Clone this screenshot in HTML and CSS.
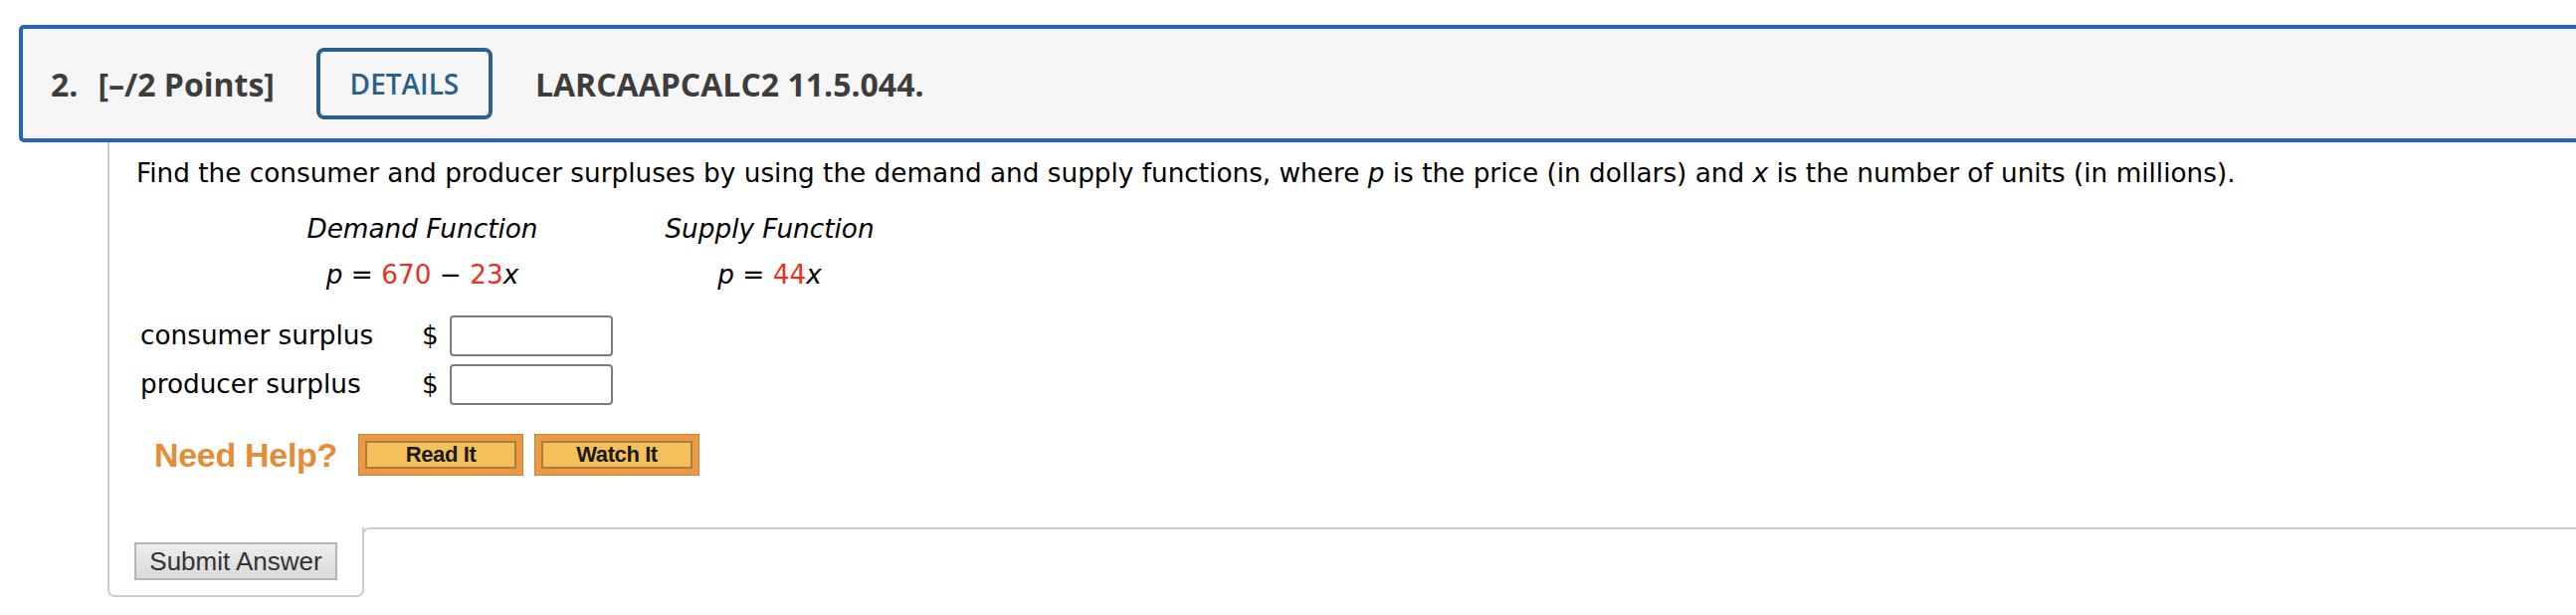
FILE: index.html
```html
<!DOCTYPE html>
<html lang="en">
<head>
<meta charset="utf-8">
<title>Question 2</title>
<link rel="stylesheet" href="styles.css">
</head>
<body>
<div class="page">
  <div class="qhead">
    <span class="qnum">2.</span>
    <span class="qpts">[–/2 Points]</span>
    <button class="details" type="button">DETAILS</button>
    <span class="qid">LARCAAPCALC2 11.5.044.</span>
  </div>
  <div class="question">
    <div class="qbody">
      <p class="prompt">Find the consumer and producer surpluses by using the demand and supply functions, where <i>p</i> is the price (in dollars) and <i>x</i> is the number of units (in millions).</p>
      <div class="funcs">
        <div class="fhead">Demand Function</div>
        <div class="fhead">Supply Function</div>
        <div class="feq"><i>p</i> = <span class="red">670</span> − <span class="red">23</span><i>x</i></div>
        <div class="feq"><i>p</i> = <span class="red">44</span><i>x</i></div>
      </div>
      <div class="answers">
        <span class="alabel">consumer surplus</span><span class="dollar">$</span><input class="ans" type="text">
        <span class="alabel">producer surplus</span><span class="dollar">$</span><input class="ans" type="text">
      </div>
      <div class="help">
        <span class="needhelp">Need Help?</span>
        <button class="hbtn" type="button"><span class="hinner">Read It</span></button>
        <button class="hbtn" type="button"><span class="hinner">Watch It</span></button>
      </div>
    </div>
    <div class="qfoot">
      <div class="tab"><button class="submit" type="button">Submit Answer</button></div>
      <div class="rest"></div>
    </div>
  </div>
</div>
</body>
</html>
```
FILE: styles.css
```css
html, body {
  margin: 0;
  padding: 0;
  background: #ffffff;
  overflow: hidden;
}

.page {
  padding-top: 25px;
  padding-left: 19px;
}

.qhead {
  display: flex;
  align-items: center;
  height: 110px;
  margin-right: -40px;
  padding-left: 28px;
  border: 4px solid #2463c6;
  border-radius: 5px;
  background: #f6f6f6;
  font-family: "Open Sans", "DejaVu Sans", sans-serif;
  font-weight: 700;
  font-size: 32px;
  color: #3d3d3d;
}

.qnum {
  margin-right: 20px;
}

.details {
  margin-left: 42px;
  width: 177px;
  height: 72px;
  padding: 0;
  border: 4px solid #2b5f8e;
  border-radius: 8px;
  background: transparent;
  color: #2b5f8e;
  font-family: "Open Sans", "DejaVu Sans", sans-serif;
  font-weight: 600;
  font-size: 28px;
}

.qid {
  margin-left: 43px;
}

.question {
  margin-left: 89px;
  font-family: "DejaVu Sans", Verdana, sans-serif;
  font-size: 26.3px;
  color: #000;
}

.qbody {
  height: 387px;
  box-sizing: border-box;
  padding-top: 11px;
  padding-left: 27px;
  border-left: 2px solid #cccccc;
}

.prompt {
  margin: 0;
  line-height: 40px;
}

.funcs {
  display: grid;
  grid-template-columns: 349px 349px;
  margin-top: 13px;
  margin-left: 113px;
  line-height: 46px;
  text-align: center;
}

.fhead {
  font-style: italic;
}

.red {
  color: #e8321f;
}

.answers {
  display: grid;
  grid-template-columns: 283px auto auto;
  justify-content: start;
  align-items: center;
  row-gap: 8px;
  margin-top: 18px;
  margin-left: 4px;
  line-height: 41px;
}

.dollar {
  margin-right: 11px;
}

.ans {
  box-sizing: border-box;
  width: 164px;
  height: 41px;
  margin: 0;
  border: 2px solid #7d7d7d;
  border-radius: 4px;
  background: #fff;
}

.help {
  display: flex;
  align-items: center;
  height: 42px;
  margin-top: 29px;
  margin-left: 18px;
}

.needhelp {
  margin-right: 21px;
  font-family: "Liberation Sans", Arial, sans-serif;
  font-weight: 700;
  font-size: 34px;
  letter-spacing: -0.3px;
  color: #e68c37;
}

.hbtn {
  box-sizing: border-box;
  width: 166px;
  height: 42px;
  margin-right: 11px;
  padding: 6px;
  border: 1px solid #c98236;
  background: #ea9a45;
  display: flex;
}

.hinner {
  flex: 1;
  display: flex;
  align-items: center;
  justify-content: center;
  border: 2px solid #b27a3c;
  background: #f4c05c;
  font-family: "Liberation Sans", Arial, sans-serif;
  font-weight: 700;
  font-size: 22px;
  letter-spacing: -0.4px;
  color: #1a1a1a;
}

.qfoot {
  display: flex;
  align-items: flex-start;
}

.tab {
  box-sizing: border-box;
  width: 258px;
  height: 70px;
  padding-top: 15px;
  padding-left: 25px;
  border-left: 2px solid #cccccc;
  border-right: 2px solid #cccccc;
  border-bottom: 2px solid #cccccc;
  border-radius: 0 0 7px 7px;
}

.submit {
  box-sizing: border-box;
  width: 204px;
  height: 38px;
  padding: 0;
  border: 2px solid #b5b5b5;
  background: linear-gradient(#ededed, #dadada);
  font-family: "Liberation Sans", Arial, sans-serif;
  font-size: 26px;
  color: #333;
}

.rest {
  flex: 1;
  height: 12px;
  margin-left: -2px;
  margin-right: -40px;
  border-top: 2px solid #cccccc;
  border-left: 2px solid #cccccc;
  border-radius: 7px 0 0 0;
}
```
